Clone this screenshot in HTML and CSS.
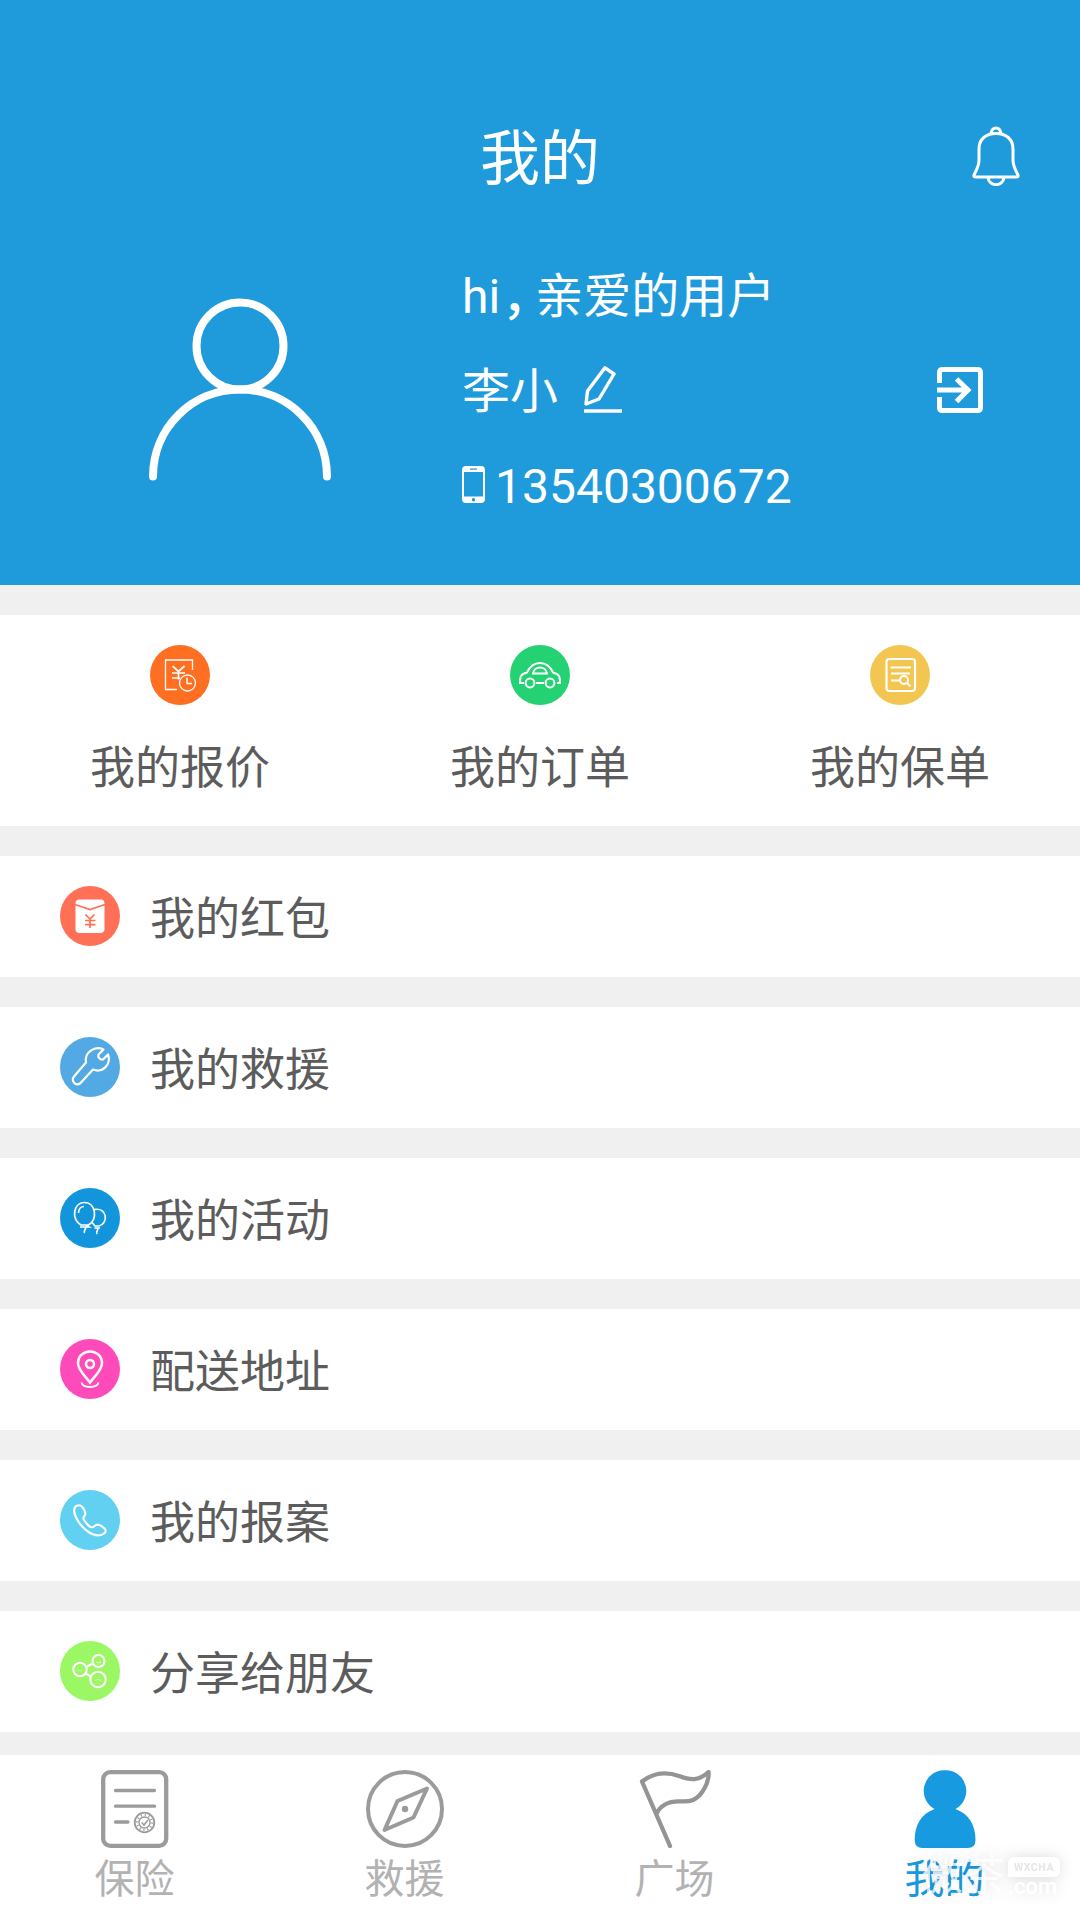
FILE: index.html
```html
<!DOCTYPE html>
<html lang="zh-CN">
<head>
<meta charset="utf-8">
<title>我的</title>
<link rel="stylesheet" href="styles.css">
</head>
<body>
<div class="app">
  <header class="header">
    <div class="titlebar">
      <h1 class="title">我的</h1>
      <svg class="bell" viewBox="0 0 48 60" fill="none" stroke="#fff" stroke-width="3" stroke-linejoin="round"><path d="M7 23C7 13 14 7.500 24 7.500S41 13 41 23V34C41 40 43 43 46 49Q46.500 51 44.500 51H3.500Q1.500 51 2 49C5 43 7 40 7 34Z"/><path d="M19 7.500C20 0 28 0 29 7.500M16 51.500C17 61 31 61 32 51.500"/></svg>
    </div>
    <div class="profile">
      <svg class="avatar" viewBox="0 0 182 183" fill="none" stroke="#fff" stroke-width="8" stroke-linecap="round"><circle cx="91" cy="48" r="43.500"/><path d="M4 178.500C4 130 43 91.500 91 91.500S178 130 178 178.500"/></svg>
      <div class="info">
        <p class="line"><span>hi</span><span class="comma">，</span><span class="cjk">亲爱的用户</span></p>
        <p class="line"><span class="cjk">李小</span><svg class="pencil" viewBox="0 0 38 47" fill="none" stroke="#fff" stroke-width="3.400" stroke-linejoin="round"><path d="M21 1.800L30 8L15 33L2 38L3.500 25Z"/><path d="M0 45H38"/></svg></p>
        <p class="line"><svg class="phone" viewBox="0 0 23 37"><path fill="#fff" fill-rule="evenodd" d="M4 0H19Q23 0 23 4V33Q23 37 19 37H4Q0 37 0 33V4Q0 0 4 0ZM2 6V30.500H21V6ZM8 2.500V3.700H15V2.500ZM11.500 32A1.700 1.700 0 1 0 11.500 35.400A1.700 1.700 0 1 0 11.500 32Z"/></svg><span class="number">13540300672</span></p>
      </div>
      <svg class="exit" viewBox="0 0 46 46" fill="none" stroke="#fff" stroke-width="5"><path d="M2.500 16V5.500Q2.500 2.500 5.500 2.500H40.500Q43.500 2.500 43.500 5.500V40.500Q43.500 43.500 40.500 43.500H5.500Q2.500 43.500 2.500 40.500V30"/><path d="M0 23H31M19.500 12L31 23L19.500 34.500" stroke-width="5"/></svg>
    </div>
  </header>

  <nav class="shortcuts">
    <a class="shortcut">
      <svg class="badge" viewBox="0 0 60 60" fill="none" stroke="#fff" stroke-width="1.300"><circle cx="30" cy="30" r="30" fill="#ff6f22" stroke="none"/><path d="M42.500 25V15H15.500V44.500H27"/><path d="M22.500 21L28.500 26.500L34.500 21M28.500 26.500V34.500M22 28H35M22 33H30" stroke-width="1.700"/><circle cx="37.500" cy="38" r="8"/><path d="M37 32.500V38.500H42"/></svg>
      <span>我的报价</span>
    </a>
    <a class="shortcut">
      <svg class="badge" viewBox="0 0 60 60" fill="none" stroke="#fff" stroke-width="2"><circle cx="30" cy="30" r="30" fill="#24d273" stroke="none"/><path d="M14 38H10C10 31 11 29 17 27.500C20 21 24 18 30 18S40 21 43 27.500C49 29 50 31 50 38H47M26 38H34M23 28.500C24 20.500 36 20.500 37 28.500Z"/><circle cx="20" cy="38" r="4.400"/><circle cx="40" cy="38" r="4.400"/></svg>
      <span>我的订单</span>
    </a>
    <a class="shortcut">
      <svg class="badge" viewBox="0 0 60 60" fill="none" stroke="#fff" stroke-width="2.200"><circle cx="30" cy="30" r="30" fill="#f2c650" stroke="none"/><rect x="16.500" y="14" width="28.500" height="32" rx="3"/><path d="M20.500 22.500H41M21 28.500H40M21 35.500H30M37 38L40.500 41.500" stroke-width="1.900"/><circle cx="34" cy="35" r="4" fill="#f2c650" stroke-width="1.900"/></svg>
      <span>我的保单</span>
    </a>
  </nav>

  <main class="menu">
    <a class="row">
      <svg class="badge" viewBox="0 0 60 60" fill="none"><circle cx="30" cy="30" r="30" fill="#ff7056"/><rect x="15.500" y="13.500" width="29" height="33.500" rx="4" fill="#fff"/><path d="M15 18.500L30 23.500L45 18.500M25.500 28.500L30 33L34.500 28.500M30 33V42M25 34.500H35.500M25 38.700H35.500" stroke="#ff7056" stroke-width="1.700"/></svg>
      <span>我的红包</span>
    </a>
    <a class="row">
      <svg class="badge" viewBox="0 0 60 60" fill="none" stroke="#fff" stroke-width="2.200" stroke-linejoin="round"><circle cx="30" cy="30" r="30" fill="#53a9e3" stroke="none"/><path d="M43.500 12.500C35 8.500 24 15 26 25.500L14 39.500C10 44 17 50.500 21 45.500L33 32.500C43 36.500 51.500 27 48 17.500L43 22.500C40 23 37.500 20.500 38.500 17.500Z"/></svg>
      <span>我的救援</span>
    </a>
    <a class="row">
      <svg class="badge" viewBox="0 0 60 60" fill="none" stroke="#fff" stroke-width="1.700"><circle cx="30" cy="30" r="30" fill="#1395dc" stroke="none"/><path d="M21 37C11 32 13 14.500 24.500 14.500S38 32 28.500 37ZM18.500 25C18.500 21 21 18.500 24 18.500M34.500 21.500C47 19 49 35 39 38H35L32 34.500M20 39H29L26 37M25.500 39C27 41 23 42 24.500 45M34.500 40H40M37.500 40C39 42 35.500 43 37 46"/></svg>
      <span>我的活动</span>
    </a>
    <a class="row">
      <svg class="badge" viewBox="0 0 60 60" fill="none" stroke="#fff" stroke-width="2.500"><circle cx="30" cy="30" r="30" fill="#ff4bb9" stroke="none"/><path d="M30 43.500C26 38 18 31 18 24.500C18 17 23.500 12.500 30 12.500S42 17 42 24.500C42 31 34 38 30 43.500Z"/><circle cx="30" cy="25" r="4"/><path d="M21.500 43.500C23 49.500 37 49.500 38.500 43.500" stroke-width="1.800"/></svg>
      <span>配送地址</span>
    </a>
    <a class="row">
      <svg class="badge" viewBox="0 0 60 60" fill="none" stroke="#fff" stroke-width="2.100" stroke-linejoin="round"><circle cx="30" cy="30" r="30" fill="#61d0f1" stroke="none"/><path d="M17.500 15.500C12.500 17 13.500 24 18 31C23 39 31 45 38 45.500C43 45.500 48 42 44.500 38.500C41 35.500 38 33 34.500 36C32.500 38 30 37.500 28 35C25 31 21.500 29 24.500 26C27 22.500 22 14 17.500 15.500Z"/></svg>
      <span>我的报案</span>
    </a>
    <a class="row">
      <svg class="badge" viewBox="0 0 60 60" fill="none" stroke="#fff" stroke-width="2.100"><circle cx="30" cy="30" r="30" fill="#9bf763" stroke="none"/><circle cx="20" cy="28.500" r="6.700"/><circle cx="38.500" cy="20" r="6"/><circle cx="38" cy="38.500" r="7.700"/><path d="M26 26L33 22.500M25.500 32.500L31 35.500"/><path d="M18 29Q20 31 22 29M36 21Q38.500 23 41 21M35 39.500Q38 37.500 41 39.500" stroke-width=".7"/></svg>
      <span>分享给朋友</span>
    </a>
  </main>

  <footer class="tabs">
    <a class="tab">
      <svg class="tab-icon" viewBox="0 0 78 78" fill="none" stroke="#9b9b9b" stroke-width="4.300" stroke-linecap="round"><rect x="7.200" y="2.200" width="63" height="73.600" rx="7"/><path d="M19.500 20.500H58.500M19.500 36.200H58.500M19.500 52H32" stroke-width="3.300"/><circle cx="48.500" cy="52.500" r="9.800" stroke-width="1.800"/><circle cx="48.500" cy="52.500" r="7.500" stroke-width="2.500" stroke-dasharray="1.100 2.827" stroke-linecap="butt"/><circle cx="48.500" cy="52.500" r="5.500" stroke-width="1.400"/><path d="M46 53L48 55L51.500 50.500" stroke-width="1.600"/></svg>
      <span>保险</span>
    </a>
    <a class="tab">
      <svg class="tab-icon" viewBox="0 0 78 78" fill="none" stroke="#9b9b9b" stroke-width="4" stroke-linejoin="round"><circle cx="39" cy="39" r="37"/><path d="M61 18.500L31.500 31L18.500 60L47.500 47.500Z"/><circle cx="39" cy="39" r="3.200" fill="#9b9b9b" stroke="none"/></svg>
      <span>救援</span>
    </a>
    <a class="tab">
      <svg class="tab-icon" viewBox="0 0 78 78" fill="none" stroke="#949494" stroke-width="4.300" stroke-linejoin="round" stroke-linecap="round"><path d="M34 76L6 11.500C17 3 30 1.500 43 6C55 10.500 63 11 72.500 2C73.500 12 66 26 57 30C48 34 40 28 29 34.500Q23 38 21 43"/></svg>
      <span>广场</span>
    </a>
    <a class="tab tab-active">
      <svg class="tab-icon" viewBox="0 0 78 78" fill="#179adf"><path d="M39 .3A20.600 20.600 0 0 0 28.500 39C15 44 8.700 55 8.700 70Q8.700 78 16.500 78H61.500Q69.500 78 69.500 70C69.500 55 63 44 49.500 39A20.600 20.600 0 0 0 39 .3Z"/></svg>
      <span>我的</span>
    </a>
    <div class="watermark">
      <span class="wm-name">微茶</span>
      <span class="wm-side"><span class="wm-bubble">WXCHA</span><span class="wm-domain">.com</span></span>
    </div>
  </footer>
</div>
</body>
</html>
```
FILE: styles.css
```css
* { box-sizing: border-box; margin: 0; padding: 0; }

body {
  width: 1080px;
  height: 1920px;
  overflow: hidden;
  background: #f0f0f0;
  color: #5c5c5c;
  font-family: Roboto, "Noto Sans CJK SC", sans-serif;
  font-size: 45px;
}

svg { display: block; flex: none; }

.app {
  display: flex;
  flex-direction: column;
  height: 1920px;
}

.header {
  height: 585px;
  padding-top: 102px;
  background: #1f9bdc;
  color: #fff;
}

.titlebar {
  display: grid;
  grid-template-columns: 1fr auto 1fr;
  align-items: center;
  height: 110px;
  padding-right: 60px;
  padding-left: 60px;
}

.title {
  grid-column: 2;
  padding-top: 5px;
  font-size: 60px;
  font-weight: 400;
  line-height: 72px;
}

.bell { width: 48px; height: 60px; margin-bottom: 2px; justify-self: end; }

.profile {
  display: flex;
  padding: 36px 97px 0 149px;
}

.avatar { width: 182px; height: 183px; margin: 50px 131px 0 0; }

.info { flex: 1; font-size: 48px; }

.line {
  display: flex;
  align-items: center;
  height: 95px;
  line-height: 60px;
  white-space: nowrap;
}

.line > span { padding-top: 2px; }
.line > .cjk { padding-top: 3px; }

.line > .comma {
  margin: 0 9px 0 2px;
  padding: 0 0 5px;
  font-family: "Noto Sans CJK SC", sans-serif;
  font-weight: 500;
  font-feature-settings: "halt";
}

.pencil { width: 38px; height: 47px; margin: -3px 0 0 26px; }
.phone { width: 23px; height: 37px; margin: -2px 10px 0 0; }
.exit { width: 46px; height: 46px; margin-top: 119px; }

.shortcuts {
  display: grid;
  grid-template-columns: repeat(3, 1fr);
  height: 211px;
  margin-top: 30px;
  background: #fff;
}

.shortcut {
  display: flex;
  flex-direction: column;
  align-items: center;
  gap: 34px;
  padding-top: 30px;
  line-height: 60px;
}

.badge { width: 60px; height: 60px; }

.menu {
  display: flex;
  flex-direction: column;
  gap: 30px;
  margin-top: 30px;
}

.row {
  display: flex;
  align-items: center;
  gap: 30px;
  height: 121px;
  padding-bottom: 1px;
  padding-left: 60px;
  background: #fff;
  line-height: 60px;
}

.row > span { padding-top: 8px; }

.tabs {
  position: relative;
  display: grid;
  grid-template-columns: repeat(4, 1fr);
  height: 165px;
  margin-top: auto;
  background: #fff;
  color: #b2b2b2;
  font-size: 40px;
}

.tab {
  display: flex;
  flex-direction: column;
  align-items: center;
  gap: 7px;
  padding-top: 15px;
  line-height: 50px;
}

.tab > span { margin-right: 1px; }
.tab-icon { width: 78px; height: 78px; }
.tab-active { color: #179adf; }

.watermark {
  position: absolute;
  top: 98px;
  right: 20px;
  display: flex;
  gap: 3px;
  color: #fff;
  filter: drop-shadow(0 0 7px rgba(0, 0, 0, .14));
}

.wm-name { font-size: 42px; line-height: 46px; opacity: .75; }
.wm-side { display: flex; flex-direction: column; }

.wm-bubble {
  margin-top: 4px;
  width: 52px;
  height: 20px;
  border-radius: 6px 6px 6px 0;
  background: #fff;
  color: #e6e6e6;
  font: 700 10.500px/21px Roboto, sans-serif;
  letter-spacing: .6px;
  text-align: center;
}

.wm-domain { font: 500 22px/20px Roboto, sans-serif; }
```
